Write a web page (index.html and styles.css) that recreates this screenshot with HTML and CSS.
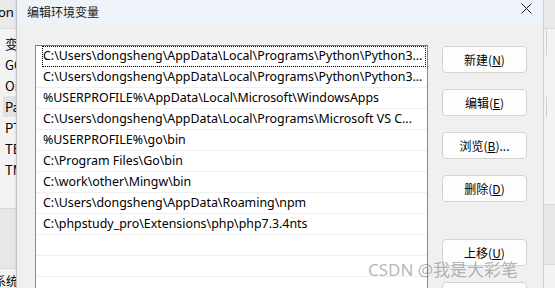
FILE: index.html
```html
<!DOCTYPE html>
<html lang="zh-CN">
<head>
  <meta charset="UTF-8" />
  <title>编辑环境变量</title>
  <link rel="stylesheet" href="styles.css">
</head>
<body>
  <!-- window behind the dialog, left edge -->
  <div class="side side-left">
    <div class="side-top">on</div>
    <div class="side-list">
      <div class="side-item">变</div>
      <div class="side-item">GO</div>
      <div class="side-item">On</div>
      <div class="side-item active">Pa</div>
      <div class="side-item">PT</div>
      <div class="side-item">TE</div>
      <div class="side-item">TM</div>
    </div>
    <div class="side-band"></div>
    <div class="side-bottom">系统</div>
  </div>

  <div class="dialog">
    <div class="titlebar">
      <span class="title">编辑环境变量</span>
      <svg class="close" width="11" height="11" viewBox="0 0 11 11">
        <path d="M0.5 0.5 L10.5 10.5 M10.5 0.5 L0.5 10.5" stroke="#1a1a1a" stroke-width="1" fill="none"/>
      </svg>
    </div>
    <div class="dialog-body">
      <div class="path-list">
        <div class="row focused">C:\Users\dongsheng\AppData\Local\Programs\Python\Python3...</div>
        <div class="row">C:\Users\dongsheng\AppData\Local\Programs\Python\Python3...</div>
        <div class="row">%USERPROFILE%\AppData\Local\Microsoft\WindowsApps</div>
        <div class="row">C:\Users\dongsheng\AppData\Local\Programs\Microsoft VS C...</div>
        <div class="row">%USERPROFILE%\go\bin</div>
        <div class="row">C:\Program Files\Go\bin</div>
        <div class="row">C:\work\other\Mingw\bin</div>
        <div class="row">C:\Users\dongsheng\AppData\Roaming\npm</div>
        <div class="row">C:\phpstudy_pro\Extensions\php\php7.3.4nts</div>
        <div class="row"></div>
        <div class="row"></div>
        <div class="row"></div>
      </div>
      <div class="actions">
        <button class="btn">新建(<u>N</u>)</button>
        <button class="btn">编辑(<u>E</u>)</button>
        <button class="btn">浏览(<u>B</u>)...</button>
        <button class="btn">删除(<u>D</u>)</button>
        <button class="btn btn-gap">上移(<u>U</u>)</button>
        <button class="btn"></button>
      </div>
    </div>
  </div>

  <!-- window behind the dialog, right edge -->
  <div class="side side-right">
    <div class="side-top"></div>
    <div class="thumb thumb-a"></div>
    <div class="thumb thumb-b"></div>
    <div class="side-band"></div>
  </div>

  <!-- hand-drawn arrow pointing at the Mingw entry -->
  <svg class="arrow" width="60" height="24" viewBox="196 174 60 24">
    <polygon points="198,186 211,177 213,180.5 248,176 216,186.5 215,193" fill="#000"/>
  </svg>

  <div class="watermark">CSDN @我是大彩笔</div>
</body>
</html>
```

FILE: styles.css
```css
/* Base */
body {
  margin: 0;
  width: 555px;
  height: 288px;
  overflow: hidden;
  display: flex;
  position: relative;
  background: #f3f3f3;
  font-family: "Noto Sans", "Noto Sans CJK SC", sans-serif;
  font-size: 12px;
  color: #000;
}

/* Windows behind the dialog */
.side {
  display: flex;
  flex-direction: column;
  overflow: hidden;
  white-space: nowrap;
  background: #f3f3f3;
}
.side-left {
  width: 16px;
  border-right: 1px solid #d2d2d2;
}
.side-right {
  flex: 1;
  position: relative;
  border-left: 1px solid #d2d2d2;
}
.side-top {
  height: 28px;
  flex: none;
  background: #e9e9e9;
  border-bottom: 1px solid #dadada;
  line-height: 24px;
  margin-left: -2px;
  font-size: 13px;
}
.side-list {
  padding-top: 4px;
  height: 172px;
  flex: none;
}
.side-item {
  height: 21px;
  line-height: 21px;
  padding-left: 5px;
  font-size: 13px;
  font-family: "Noto Sans CJK SC", sans-serif;
}
.side-item.active {
  background: #e2e2e2;
  margin-left: 3px;
  padding-left: 2px;
}
.side-band {
  height: 59px;
  flex: none;
  margin-top: 3px;
  background: #e7e7e7;
  border-top: 1px solid #d8d8d8;
  border-bottom: 1px solid #d8d8d8;
}
.side-right .side-band {
  margin-top: 175px;
}
.side-bottom {
  margin-left: -6px;
  padding-top: 3px;
  font-size: 12px;
}
.thumb {
  position: absolute;
  left: 2px;
  width: 1px;
  background: #d0d0d0;
}
.thumb-a { top: 30px; height: 25px; }
.thumb-b { top: 97px; height: 20px; }

/* Dialog */
.dialog {
  width: 526px;
  flex: none;
  display: flex;
  flex-direction: column;
  background: #f0f0f0;
  box-shadow: -1px 0 3px rgba(0, 0, 0, 0.12);
  z-index: 1;
}
.titlebar {
  height: 23px;
  flex: none;
  display: flex;
  align-items: center;
  justify-content: space-between;
  padding: 0 11px 0 10px;
  background: #eef3f9;
}
.title {
  font-family: "Noto Sans CJK SC", sans-serif;
  font-size: 12px;
  color: #1a1a1a;
  margin-top: -1px;
}
.close {
  margin-top: -7px;
}
.dialog-body {
  flex: 1;
  min-height: 0;
  display: flex;
  overflow: hidden;
  padding: 22px 16px 0 18px;
}

/* Path list */
.path-list {
  width: 393px;
  box-sizing: border-box;
  background: #fff;
  border: 1px solid #8a8a8a;
  border-bottom: none;
  border-top-color: #7a7a7a;
}
.row {
  height: 20px;
  line-height: 20px;
  border-bottom: 1px solid #f0f0f0;
  padding-left: 7px;
  white-space: nowrap;
  overflow: hidden;
  font-family: "Noto Sans", sans-serif;
  font-size: 12.4px;
}
.row.focused {
  outline: 1px dotted #000;
  outline-offset: -1px;
  margin: 0 1px 0 6px;
  padding-left: 1px;
}

/* Buttons */
.actions {
  width: 85px;
  margin-left: 14px;
  padding-top: 1px;
  display: flex;
  flex-direction: column;
  gap: 16px;
}
.btn {
  height: 27px;
  flex: none;
  background: #fdfdfd;
  border: 1px solid #d3d3d3;
  border-radius: 4px;
  font-family: "Noto Sans CJK SC", sans-serif;
  font-size: 12px;
  color: #000;
  padding: 0;
}
.btn-gap {
  margin-top: 21px;
}

/* Overlays */
.arrow {
  position: absolute;
  left: 196px;
  top: 174px;
}
.watermark {
  position: absolute;
  left: 368px;
  top: 256px;
  z-index: 2;
  font-family: "Noto Sans", "Noto Sans CJK SC", sans-serif;
  font-size: 17px;
  color: rgba(120, 120, 120, 0.55);
  white-space: nowrap;
}
```
